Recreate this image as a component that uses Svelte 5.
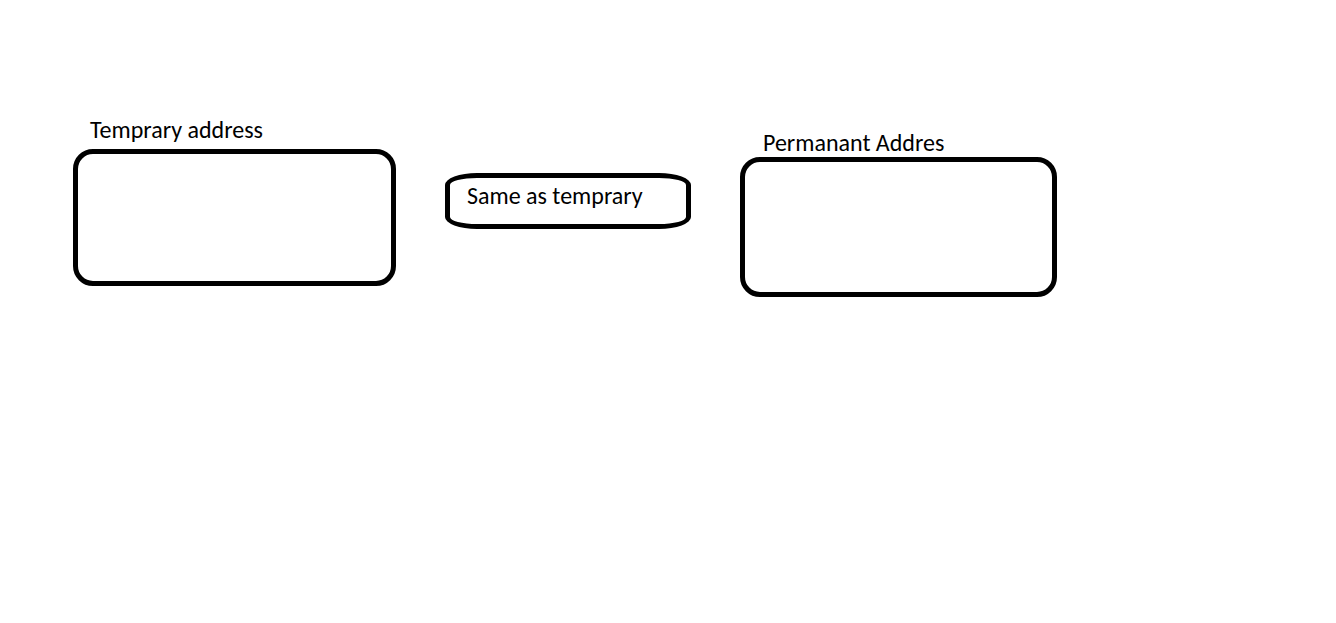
<script>
  let temporary = $state('');
  let permanent = $state('');

  function copyAddress() {
    permanent = temporary;
  }
</script>

<main>
  <div class="field temporary">
    <label for="temporary">Temprary address</label>
    <textarea id="temporary" bind:value={temporary}></textarea>
  </div>
  <button type="button" onclick={copyAddress}>Same as temprary</button>
  <div class="field permanent">
    <label for="permanent">Permanant Addres</label>
    <textarea id="permanent" bind:value={permanent}></textarea>
  </div>
</main>

<style>
  :global(body) {
    margin: 0;
    background: #fff;
  }

  main {
    display: grid;
    grid-template-columns: 323fr 246fr 317fr;
    column-gap: 49px;
    align-items: start;
    max-width: 984px;
    padding: 116px 24px 24px 73px;
    box-sizing: content-box;
    color: #000;
    font: 24px/28px Calibri, Carlito, Lato, sans-serif;
  }

  .field {
    display: flex;
    flex-direction: column;
  }

  label {
    padding-left: 17px;
  }

  textarea {
    box-sizing: border-box;
    width: 100%;
    margin: 0;
    padding: 8px 16px;
    border: 5px solid #000;
    border-radius: 20px;
    background: #fff;
    color: inherit;
    font: inherit;
    resize: none;
    outline: none;
  }

  .temporary {
    gap: 5px;
  }

  .temporary textarea {
    height: 137px;
  }

  .permanent {
    padding-top: 13px;
  }

  .permanent label {
    padding-left: 23px;
  }

  .permanent textarea {
    height: 140px;
  }

  button {
    box-sizing: border-box;
    margin: 57px 0 0;
    padding: 4px 17px 14px;
    border: 5px solid #000;
    border-radius: 32px / 12px;
    background: #fff;
    color: inherit;
    font: inherit;
    text-align: left;
    white-space: nowrap;
    cursor: pointer;
  }
</style>
